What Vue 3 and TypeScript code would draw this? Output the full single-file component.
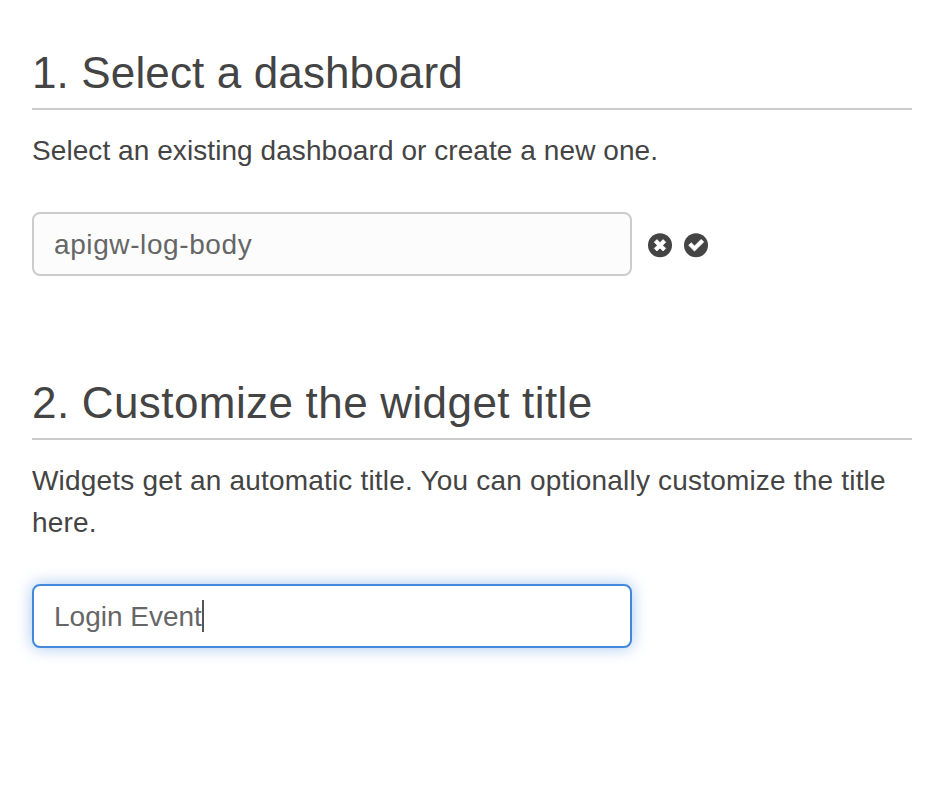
<script setup lang="ts">
import { ref } from 'vue'

const dashboard = ref<string>('apigw-log-body')
const widgetTitle = ref<string>('Login Event')
</script>

<template>
  <main class="page">
    <section class="step first">
      <h2>1. Select a dashboard</h2>
      <p class="intro">Select an existing dashboard or create a new one.</p>
      <div class="row">
        <div class="field"><span class="name">{{ dashboard }}</span></div>
        <svg class="icon" viewBox="0 0 24 24">
          <circle cx="12" cy="12.3" r="12" />
          <path d="M8.9 6.6 12 9.7 15.1 6.6 17.7 9.2 14.6 12.3 17.7 15.4 15.1 18 12 14.9 8.9 18 6.3 15.4 9.4 12.3 6.3 9.2Z" />
        </svg>
        <svg class="icon" viewBox="0 0 24 24">
          <circle cx="12" cy="12.3" r="12" />
          <path d="M4.7 12.3 7.2 9.8 10.5 13.1 17.2 6.4 19.7 8.9 10.5 18.1Z" />
        </svg>
      </div>
    </section>
    <section class="step">
      <h2 class="wide">2. Customize the widget title</h2>
      <p class="help">Widgets get an automatic title. You can optionally customize the title<br />here.</p>
      <div class="field focused"><span>{{ widgetTitle }}</span><i class="caret"></i></div>
    </section>
  </main>
</template>

<style>
body { background: #fff; }
</style>

<style scoped>
.page {
  box-sizing: border-box;
  height: 798px;
  padding: 38px 38px 0 32px;
  font-family: "Liberation Sans", Arial, sans-serif;
  color: #444;
}
.first { height: 330px; }
h2 {
  box-sizing: border-box;
  height: 72px;
  margin: 0;
  border-bottom: 2px solid #ccc;
  font-size: 44px;
  font-weight: 400;
  line-height: 70px;
  letter-spacing: 0.13px;
  white-space: nowrap;
}
.wide { letter-spacing: 0.43px; word-spacing: -0.5px; }
p {
  margin: 20px 0 40px;
  font-size: 28px;
  line-height: 42px;
  white-space: nowrap;
}
.intro { letter-spacing: 0.07px; }
.help { letter-spacing: 0.19px; }
.row { display: flex; align-items: center; }
.field {
  box-sizing: border-box;
  display: flex;
  align-items: center;
  width: 600px;
  height: 64px;
  padding: 0 20px;
  border: 2px solid #ccc;
  border-radius: 8px;
  background: #fcfcfc;
  color: #666;
  font-size: 28px;
}
.field span { padding-top: 2px; }
.name { letter-spacing: 0.6px; }
.focused {
  border-color: #4488db;
  background: #fff;
  box-shadow: 0 0 16px rgba(68, 136, 219, 0.48);
}
.caret { width: 2px; height: 32px; background: #555; }
.icon { width: 24px; height: 24px; margin: 2px 0 0 16px; fill: #444; overflow: visible; }
.icon + .icon { margin-left: 12px; }
.icon path {
  fill: #fff;
  stroke: #fff;
  stroke-width: 0.8;
  stroke-linejoin: round;
}
</style>
